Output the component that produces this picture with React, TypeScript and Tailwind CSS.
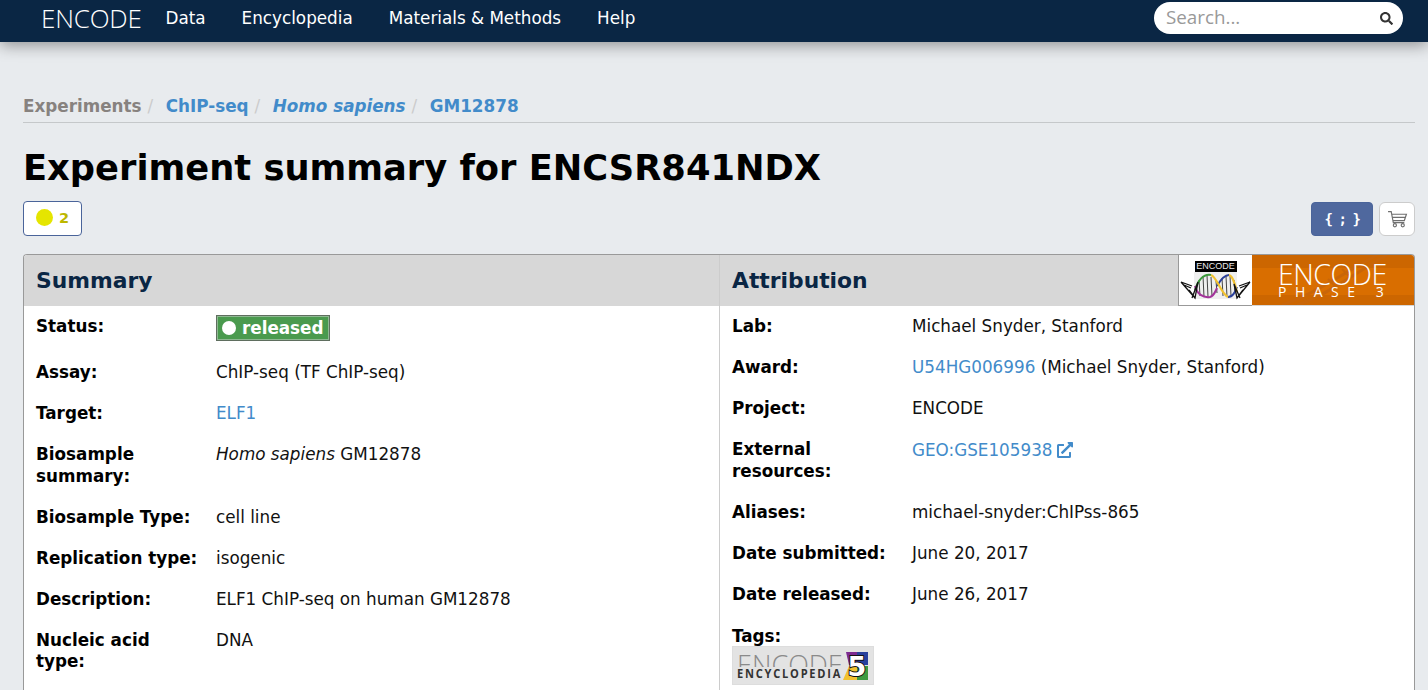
import { FaExternalLinkAlt, FaSearch } from 'react-icons/fa';
import type { ReactNode } from 'react';

const font = "font-['DejaVu_Sans',sans-serif]";

function Row({ label, children }: { label: ReactNode; children: ReactNode }) {
  return (
    <div className="flex pb-[19.4px] leading-[21.6px] text-[16.8px]">
      <div className="font-bold text-black shrink-0 pr-2 w-[180px]">{label}</div>
      <div className="text-[#111] min-w-0">{children}</div>
    </div>
  );
}

function A({ children }: { children: ReactNode }) {
  return <a className="text-[#428bca]">{children}</a>;
}

function Sep() {
  return <span className="text-[#ccc] font-normal ml-[6px] mr-[12.500px]">/</span>;
}

function DnaLogo() {
  return (
    <div className="w-[74px] h-[51px] bg-white flex flex-col items-center shrink-0 border-l border-b border-[#999]">
      <div className="mt-[6px] w-[42px] h-[11px] bg-black text-[#e8e8e8] text-[9px] leading-[11px] text-center font-['Liberation_Sans',sans-serif]">ENCODE</div>
      <svg viewBox="0 0 74 30" className="w-[74px] h-[30px]">
        <rect x="15" y="0" width="43" height="27" fill="#efefef" />
        <g stroke="#444" strokeWidth="1">
          <path d="M20 8l1 16M24 4l1 21M28 3l1 22M32 5l1 19M37 9l1 12M43 6l1 18M47 4l1 21M51 4l1 20M55 8l1 12" />
        </g>
        <path d="M16 18C20 6 26 2 32 3" fill="none" stroke="#3a9a3a" strokeWidth="2" />
        <path d="M16 14c2 8 8 12 15 11 4-1 5-5 7-9" fill="none" stroke="#a3339a" strokeWidth="2" />
        <path d="M38 14c4-7 8-11 12-11" fill="none" stroke="#2a3f9a" strokeWidth="2" />
        <path d="M49 25c5 0 7-5 9-10" fill="none" stroke="#2a3f9a" strokeWidth="2" />
        <path d="M32 3c6 2 10 19 17 22" fill="none" stroke="#f2c230" strokeWidth="2.200" />
        <path d="M50 3c4 1 6 9 8 17" fill="none" stroke="#f2c230" strokeWidth="2" />
        <g fill="none" stroke="#111" strokeWidth="1.300">
          <path d="M2 10l14 16 3-16-6 16M2 10l11 4M5 13l7 3M16 26l-6-8" />
          <path d="M71 10L58 26l-3-14 6 14M71 10l-11 4M68 13l-7 3M58 26l6-8" />
        </g>
      </svg>
    </div>
  );
}

function PhaseLogo() {
  return (
    <div className="relative w-[162px] h-[50px] bg-[#cc6600] overflow-hidden rounded-tr-[3px] shrink-0 font-['Open_Sans',sans-serif] text-white">
      <svg viewBox="0 0 162 50" className="absolute inset-0 w-full h-full">
        <rect x="0" y="13" width="162" height="27" fill="#d96e00" />
        <path d="M30 50C60 40 80 25 125 0M45 50C75 40 100 20 135 0" fill="none" stroke="#c96608" strokeWidth="3" />
        <path d="M50 42l6 6M62 34l7 7M76 24l7 7M90 14l7 7M104 6l7 6" stroke="#c96608" strokeWidth="2" />
      </svg>
      <div className="relative flex flex-col items-start pl-[26px]">
        <div className="text-[28.5px] leading-[21px] font-light mt-[9px] tracking-[-0.5px]">ENCODE</div>
        <div className="text-[14px] leading-[11px] mt-[1px] font-normal tracking-[8.500px] whitespace-nowrap">PHASE 3</div>
      </div>
    </div>
  );
}

function TagLogo() {
  return (
    <div className="w-[142px] h-[39px] bg-[#e3e3e3] border border-[#ddd] flex items-center overflow-hidden pl-[4px]">
      <div className="w-[106px] shrink-0 flex flex-col items-start overflow-hidden">
        <div className="h-[16px] mt-[1px] text-[27px] leading-[27px] text-[#8a8a8a] font-['Open_Sans',sans-serif] font-light overflow-hidden">ENCODE</div>
        <div className="text-[12.500px] leading-[14px] font-bold tracking-[2px] text-[#333] font-['Open_Sans',sans-serif] whitespace-nowrap origin-left scale-x-[0.885]">ENCYCLOPEDIA</div>
      </div>
      <svg viewBox="0 0 26 28" className="w-[26px] h-[28px] shrink-0">
        <polygon points="3,0 14,0 14,13 6,13" fill="#7b2a90" />
        <polygon points="14,0 25,0 25,13 14,13" fill="#28409c" />
        <polygon points="6,14 14,14 14,28 0,28" fill="#f2c230" />
        <polygon points="14,14 25,14 25,28 14,28" fill="#3f9a3f" />
        <text x="14" y="24" textAnchor="middle" fontSize="27" fontWeight="bold" fill="#fff" stroke="#111" strokeWidth="2" paintOrder="stroke" fontFamily="DejaVu Sans, sans-serif">5</text>
      </svg>
    </div>
  );
}

function CartIcon() {
  return (
    <svg viewBox="0 0 20 20" className="w-[21px] h-[21px]" fill="none" stroke="#6f6f6f" strokeWidth="1.1">
      <path d="M1 2.500h3l2 10.500h10.500M4.500 5h14l-2 6H6M5.500 8h12.500" />
      <circle cx="7.500" cy="15.500" r="1.500" />
      <circle cx="15" cy="15.500" r="1.500" />
    </svg>
  );
}

export default function App() {
  return (
    <div className={`${font} h-[690px] overflow-hidden bg-[#e8ebee] text-black`}>
      <nav className="relative h-[42px] bg-[#0a2644] flex items-center shadow-[0_3px_16px_rgba(0,0,0,0.4)]">
        <div className="ml-[41px] mb-[7px] text-[26px] font-['Open_Sans',sans-serif] font-light text-white leading-none tracking-[-0.2px] w-[124.500px]">ENCODE</div>
        <div className="flex items-center gap-[36px] text-[16.800px] text-white leading-none mb-[6px]">
          <span>Data</span>
          <span>Encyclopedia</span>
          <span>Materials &amp; Methods</span>
          <span>Help</span>
        </div>
        <div className="ml-auto mr-[25px] mb-[6px] w-[249px] h-[32px] bg-white rounded-[16px] flex items-center pl-[12px] pr-[10px] justify-between">
          <span className="text-[18.800px] leading-none mb-[2px] text-[#999] font-['Open_Sans',sans-serif]">Search...</span>
          <FaSearch size={13} className="text-[#333]" />
        </div>
      </nav>

      <main className="px-[23px] pr-[13px]">
        <div className="mt-[43px] h-[38px] border-b border-[#c5c8ca] flex items-end text-[16.800px] font-bold whitespace-nowrap pb-[3px]">
          <span className="text-[#87827f]">Experiments</span>
          <Sep />
          <A>ChIP-seq</A>
          <Sep />
          <i><A>Homo sapiens</A></i>
          <Sep />
          <A>GM12878</A>
        </div>

        <h1 className="mt-[21px] text-[35.280px] leading-[48px] font-bold text-black whitespace-nowrap">Experiment summary for ENCSR841NDX</h1>

        <div className="mt-[9px] flex items-start">
          <div className="w-[59px] h-[35px] bg-white border border-[#4a649a] rounded-[4px] flex items-center pl-[12px] pb-[3px] gap-[6px]">
            <span className="w-[17px] h-[17px] rounded-full bg-[#e5e500]" />
            <span className="text-[14.500px] font-bold text-[#bdb700] mt-[3px]">2</span>
          </div>
          <div className="ml-auto flex gap-[6px] mt-[1px]">
            <div className="w-[62px] h-[34px] bg-[#4f689e] border border-[#4a649a] rounded-[4px] flex items-center justify-center text-white text-[14px] font-bold tracking-[-1.400px] font-['DejaVu_Sans_Mono',monospace] whitespace-pre">{'{ ; }'}</div>
            <div className="w-[36px] h-[34px] bg-white border border-[#ccc] rounded-[6px] flex items-center justify-center"><CartIcon /></div>
          </div>
        </div>

        <div className="mt-[18px] grid grid-cols-[696px_1fr] bg-white border border-[#999] border-b-0 rounded-t-[4px] w-[1392px]">
          <section className="border-r border-[#ccc]">
            <header className="h-[51px] bg-[#d7d7d7] flex items-center px-[12px] pt-[2px] rounded-tl-[3px]">
              <h2 className="text-[21.840px] font-bold text-[#0a2644]">Summary</h2>
            </header>
            <div className="px-[12px] pt-[10.300px]">
              <div className="flex pb-[19.4px] leading-[21.6px] text-[16.800px]">
                <div className="w-[180px] font-bold shrink-0">Status:</div>
                <div className="h-[26px] flex items-center gap-[6px] bg-[#4a9a4e] border border-[#5f6e5f] shadow-[inset_0_0_0_1px_#8fb892] pl-[5px] text-white font-bold w-[114px] mt-[-1px] mb-[1.600px]">
                  <span className="w-[14px] h-[14px] rounded-full bg-white shrink-0" />
                  <span className="leading-none">released</span>
                </div>
              </div>
              <Row label="Assay:">ChIP-seq (TF ChIP-seq)</Row>
              <Row label="Target:"><A>ELF1</A></Row>
              <Row label={<>Biosample<br />summary:</>}><i>Homo sapiens</i> GM12878</Row>
              <Row label="Biosample Type:">cell line</Row>
              <Row label="Replication type:">isogenic</Row>
              <Row label="Description:">ELF1 ChIP-seq on human GM12878</Row>
              <Row label={<>Nucleic acid<br />type:</>}>DNA</Row>
            </div>
          </section>
          <section>
            <header className="h-[51px] bg-[#d7d7d7] flex items-start pl-[12px] rounded-tr-[3px]">
              <h2 className="text-[21.840px] font-bold text-[#0a2644] self-center pt-[2px]">Attribution</h2>
              <div className="ml-auto flex"><DnaLogo /><PhaseLogo /></div>
            </header>
            <div className="px-[12px] pt-[10.300px]">
              <Row label="Lab:">Michael Snyder, Stanford</Row>
              <Row label="Award:"><A>U54HG006996</A> (Michael Snyder, Stanford)</Row>
              <Row label="Project:">ENCODE</Row>
              <Row label={<>External<br />resources:</>}>
                <span className="inline-flex items-center gap-[4px] text-[#428bca] pt-[1px]">GEO:GSE105938<FaExternalLinkAlt size={16} className="mb-[3px]" /></span>
              </Row>
              <Row label="Aliases:">michael-snyder:ChIPss-865</Row>
              <Row label="Date submitted:">June 20, 2017</Row>
              <Row label="Date released:">June 26, 2017</Row>
              <div className="font-bold text-[16.800px] leading-[21.6px] mt-[1px] mb-[-1.300px]">Tags:</div>
              <TagLogo />
            </div>
          </section>
        </div>
      </main>
    </div>
  );
}
